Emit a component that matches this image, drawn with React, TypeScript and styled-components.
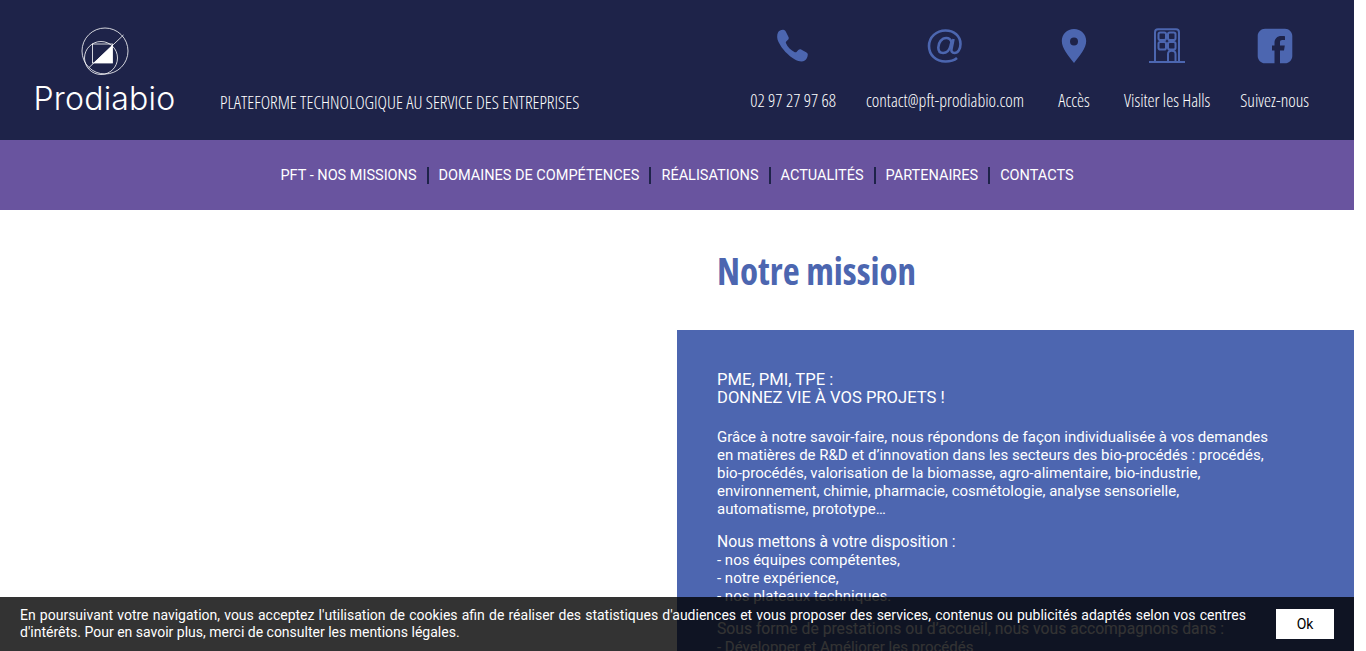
import React from "react";
import styled, { createGlobalStyle } from "styled-components";

const Global = createGlobalStyle`
  html, body { margin: 0; padding: 0; height: 100%; overflow: hidden; background: #fff; }
  #root { height: 651px; overflow: hidden; }
  * { box-sizing: border-box; }
`;
const Page = styled.div`
  width: 1354px; height: 651px; overflow: hidden; position: relative;
  font-family: Roboto, "Liberation Sans", sans-serif; display: flex; flex-direction: column;
`;
const Header = styled.header`
  height: 140px; flex: none; background: #1e2349; display: flex; align-items: stretch; justify-content: space-between;
  padding: 0 45px 0 33px; color: #fff;
`;
const Brand = styled.div`display: flex; align-items: flex-end; padding-bottom: 26px;`;
const Logo = styled.div`display: flex; flex-direction: column; align-items: center; width: 143px; margin-right: 44px;`;
const LogoWord = styled.div`
  font-family: Inter, sans-serif; font-weight: 350; font-size: 32px; line-height: 31px; height: 31px; margin-top: 8px; letter-spacing: .2px; white-space: nowrap;
`;
const Cond = styled.span`
  font-family: "Open Sans", sans-serif; font-weight: 300; font-stretch: 75%; color: #fff;
`;
const Tagline = styled(Cond)`font-size: 17.9px; line-height: 24px;`;
const Links = styled.nav`display: flex; gap: 30px; padding-top: 27px;`;
const LinkItem = styled.a`display: flex; flex-direction: column; align-items: center; gap: 23px; min-width: 40px;`;
const IconBox = styled.div`height: 38px; display: flex; align-items: center; justify-content: center; color: #4c66b0;`;
const LinkText = styled(Cond)`font-size: 17.8px; line-height: 24px; white-space: nowrap;`;
const Menu = styled.nav`
  height: 70px; flex: none; background: #69549f; display: flex; align-items: center; justify-content: center;
`;
const MenuItem = styled.a<{ $last?: boolean }>`
  color: #fff; font-size: 14.5px; font-weight: 400; padding: 0 10px; line-height: 17px; white-space: nowrap;
  border-right: ${p => (p.$last ? "none" : "2px solid #1e2349")};
`;
const Main = styled.main`display: grid; grid-template-columns: 677px 1fr; flex: 1;`;
const Media = styled.div``;
const Content = styled.section`display: flex; flex-direction: column;`;
const Title = styled.h1`
  margin: 0; height: 120px; padding: 38px 0 0 40px; font-family: "Open Sans", sans-serif; font-stretch: 75%; font-weight: 700;
  font-size: 37px; line-height: 46px; color: #4c66b0;
`;
const Panel = styled.div`
  flex: 1; background: #4d66b0; color: #fff; padding: 41px 85px 0 40px; font-size: 15px; line-height: 18px;
`;
const Lead = styled.h2`margin: 0 0 21px; font-weight: 400; font-size: 16.6px; line-height: 18px;`;
const Para = styled.p`margin: 0 0 15px;`;
const Strong = styled.span`font-size: 15.7px;`;
const Cookie = styled.div`
  position: absolute; left: 0; right: 0; bottom: 0; height: 54px; background: rgba(0,0,0,.8); color: #fff;
  display: flex; align-items: center; justify-content: space-between; padding: 0 20px;
  font-size: 14px; line-height: 17px;
`;
const CookieText = styled.div`width: 1226px; text-align: justify;`;
const Ok = styled.button`
  width: 58px; height: 30px; border: 0; background: #fff; color: #000; font: 400 14px Roboto, sans-serif; padding: 0;
`;

const links = [
  ["02 97 27 97 68", <svg key="p" width="36" height="36" viewBox="0 0 36 36"><path fill="currentColor" d="M3 4.500C4 2.500 7 1.500 9 2c1 .3 1.500 1 2 2l2.500 5c.5 1 .3 2-.5 2.800l-1.800 1.700c-.5.5-.5 1-.2 1.700 1.500 3.500 5 7.300 8.800 9 .7.300 1.200.200 1.700-.3l1.800-1.900c.8-.8 1.800-1 2.800-.5l5 2.800c1 .6 1.700 1.300 1.700 2.300 0 2.200-1.300 5-3 6-2.500 1.500-6 1-9.500-.8C13 27.500 7 21 3.500 14 1.800 10.500 1.800 7 3 4.500z"/></svg>],
  ["contact@pft-prodiabio.com", <svg key="a" width="38" height="36" viewBox="0 0 38 36" fill="none" stroke="currentColor" strokeWidth="2.600"><path d="M31 30c-3 2.500-7 3.500-11.500 3.500C10 33.500 3 27 3 18 3 9 10.500 2.500 19.500 2.500 28 2.500 34.500 8 34.500 16c0 5-2.500 9-6 9-2.500 0-3.500-1.700-3-4l2-10"/><path d="M25.500 14c-.8-2.500-2.700-4-5.200-4-4.500 0-8 4.500-8 9.500 0 3.500 2 5.500 4.800 5.500 3.500 0 6.500-3 7.400-7z"/></svg>],
  ["Accès", <svg key="m" width="26" height="36" viewBox="0 0 26 36"><path fill="currentColor" fillRule="evenodd" d="M13 1C6 1 .8 6.300.8 13c0 7 6.500 15 12.200 22 5.700-7 12.200-15 12.200-22C25.200 6.300 20 1 13 1zm0 8.500a4 4 0 1 1 0 8 4 4 0 0 1 0-8z"/></svg>],
  ["Visiter les Halls", <svg key="b" width="36" height="36" viewBox="0 0 36 36" fill="none" stroke="currentColor" strokeWidth="2"><path d="M0 34h36"/><path d="M6 34V4.500C6 2.500 7.200 1.300 9 1.300h18c1.800 0 3 1.200 3 3.200V34"/><rect x="9.500" y="4.500" width="7.500" height="7.500" rx="1.800"/><rect x="19" y="4.500" width="7.500" height="7.500" rx="1.800"/><rect x="9.500" y="14" width="7.500" height="7.500" rx="1.800"/><rect x="19" y="14" width="7.500" height="7.500" rx="1.800"/><path d="M19 34v-8c0-4.500 7.500-4.500 7.500 0v8"/></svg>],
  ["Suivez-nous", <svg key="f" width="36" height="36" viewBox="0 0 36 36"><path fill="currentColor" d="M8 .7h20c4 0 7.300 3.300 7.300 7.300v20c0 4-3.300 7.300-7.300 7.300h-5V22.500h4l.8-5H23v-3c0-1.600.6-2.400 2.400-2.400H28V8.200c-1-.2-2-.2-3.500-.2-4.500 0-7 2.700-7 7v2.500H15v5h2.500v12.800H8c-4 0-7.300-3.300-7.300-7.300V8C.7 4 4 .7 8 .7z"/></svg>],
] as const;
const menu = ["PFT - NOS MISSIONS", "DOMAINES DE COMPÉTENCES", "RÉALISATIONS", "ACTUALITÉS", "PARTENAIRES", "CONTACTS"];

export default function App() {
  return (
    <Page>
      <Global />
      <Header>
        <Brand>
          <Logo>
            <svg width="48" height="48" viewBox="0 0 48 48" fill="none" stroke="#fff" strokeWidth="0.800">
              <circle cx="24" cy="24" r="23" />
              <circle cx="20" cy="31" r="16.500" />
              <rect x="11.500" y="17" width="20" height="19" />
              <path d="M7.500 41 42.500 8" />
              <path fill="#fff" stroke="none" d="M31.500 18v18H12.500z" />
            </svg>
            <LogoWord>Prodiabio</LogoWord>
          </Logo>
          <Tagline>PLATEFORME TECHNOLOGIQUE AU SERVICE DES ENTREPRISES</Tagline>
        </Brand>
        <Links>
          {links.map(([t, icon]) => (
            <LinkItem key={t}><IconBox>{icon}</IconBox><LinkText>{t}</LinkText></LinkItem>
          ))}
        </Links>
      </Header>
      <Menu>
        {menu.map((m, i) => <MenuItem key={m} $last={i === menu.length - 1}>{m}</MenuItem>)}
      </Menu>
      <Main>
        <Media />
        <Content>
          <Title>Notre mission</Title>
          <Panel>
            <Lead>PME, PMI, TPE :<br />DONNEZ VIE À VOS PROJETS !</Lead>
            <Para>Grâce à notre savoir-faire, nous répondons de façon individualisée à vos demandes en matières de R&amp;D et d’innovation dans les secteurs des bio-procédés : procédés, bio-procédés, valorisation de la biomasse, agro-alimentaire, bio-industrie, environnement, chimie, pharmacie, cosmétologie, analyse sensorielle, automatisme, prototype…</Para>
            <Para><Strong>Nous mettons à votre disposition :</Strong><br />- nos équipes compétentes,<br />- notre expérience,<br />- nos plateaux techniques.</Para>
            <Para><Strong>Sous forme de prestations ou d’accueil, nous vous accompagnons dans :</Strong><br />- Développer et Améliorer les procédés</Para>
          </Panel>
        </Content>
      </Main>
      <Cookie>
        <CookieText>En poursuivant votre navigation, vous acceptez l'utilisation de cookies afin de réaliser des statistiques d'audiences et vous proposer des services, contenus ou publicités adaptés selon vos centres d'intérêts. Pour en savoir plus, merci de consulter les mentions légales.</CookieText>
        <Ok>Ok</Ok>
      </Cookie>
    </Page>
  );
}
